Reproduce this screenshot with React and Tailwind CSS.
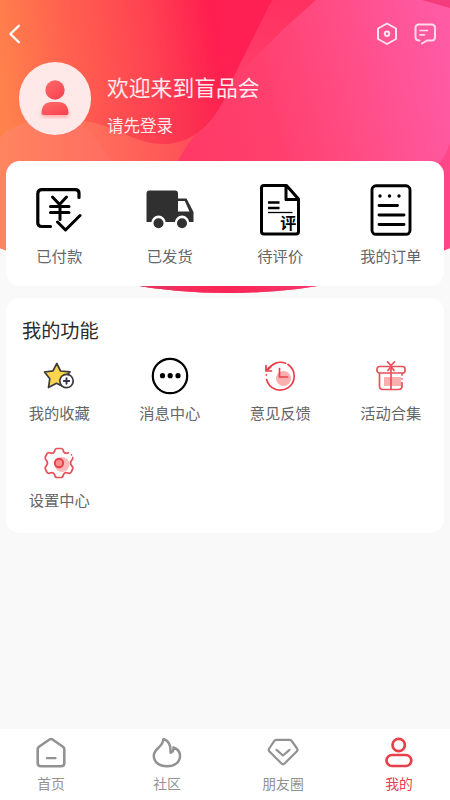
import { useState } from 'react';

const HeaderBackground = () => (
  <svg className="absolute left-0 top-0 w-full h-[294px]" viewBox="0 0 450 294" fill="none">
    <defs>
      <linearGradient id="base" gradientUnits="userSpaceOnUse" x1="190" y1="130" x2="450" y2="70">
        <stop offset="0" stopColor="#ff3a66" />
        <stop offset="0.3" stopColor="#ff406e" />
        <stop offset="0.7" stopColor="#ff508c" />
        <stop offset="1" stopColor="#ff5aa4" />
      </linearGradient>
      <linearGradient id="coral" gradientUnits="userSpaceOnUse" x1="0" y1="150" x2="215" y2="130">
        <stop offset="0" stopColor="#ff8a5c" />
        <stop offset="0.5" stopColor="#ff6a5a" />
        <stop offset="0.8" stopColor="#ff5658" />
        <stop offset="1" stopColor="#ff3f60" />
      </linearGradient>
      <linearGradient id="hill" gradientUnits="userSpaceOnUse" x1="0" y1="150" x2="112" y2="150">
        <stop offset="0" stopColor="#ff8560" />
        <stop offset="1" stopColor="#ff6c62" />
      </linearGradient>
      <linearGradient id="wave" gradientUnits="userSpaceOnUse" x1="0" y1="80" x2="235" y2="50">
        <stop offset="0" stopColor="#ff824c" />
        <stop offset="0.3" stopColor="#ff614f" />
        <stop offset="0.65" stopColor="#ff4252" />
        <stop offset="0.92" stopColor="#ff1e50" />
        <stop offset="1" stopColor="#ff2053" />
      </linearGradient>
      <linearGradient id="shade" gradientUnits="userSpaceOnUse" x1="130" y1="80" x2="165" y2="150">
        <stop offset="0" stopColor="#f0304f" stopOpacity="0" />
        <stop offset="1" stopColor="#f0304f" stopOpacity="0.3" />
      </linearGradient>
      <linearGradient id="beam" gradientUnits="userSpaceOnUse" x1="262" y1="0" x2="248" y2="80">
        <stop offset="0" stopColor="#ff3160" />
        <stop offset="1" stopColor="#ff3f69" />
      </linearGradient>
      <linearGradient id="bottom" gradientUnits="userSpaceOnUse" x1="130" y1="0" x2="330" y2="0">
        <stop offset="0" stopColor="#e8305f" />
        <stop offset="0.22" stopColor="#ea325f" />
        <stop offset="0.23" stopColor="#f42d5c" />
        <stop offset="0.5" stopColor="#fb2456" />
        <stop offset="1" stopColor="#f23c70" />
      </linearGradient>
      <clipPath id="arc">
        <path d="M0 0H450V248Q344 293 229 293Q114 293 0 248Z" />
      </clipPath>
    </defs>
    <g clipPath="url(#arc)">
      <rect width="450" height="294" fill="url(#base)" />
      <path d="M0 100H214Q206 120 196 134Q186 146 177 162V294H0Z" fill="url(#coral)" />
      <path d="M80 124Q98 138 112 162V294H0V137Q40 105 80 124Z" fill="url(#hill)" />
      <path d="M260 0H316Q270 40 234 80Z" fill="url(#beam)" />
      <path id="wave-shape" d="M0 0H272L233 78C222 112 200 144 163 144C135 144 112 124 84 121C50 115 18 120 0 137Z" fill="url(#wave)" />
      <path d="M233 78C222 112 200 144 163 144C135 144 112 124 84 121V50H233Z" fill="url(#shade)" />
      <path d="M422 0L450 8V0Z" fill="#f43b7c" />
      <path d="M450 143Q447 154 438 165V294H450Z" fill="#ff4688" />
      <rect x="120" y="280" width="220" height="14" fill="url(#bottom)" />
    </g>
  </svg>
);

const PaidIcon = () => (
  <svg width="46" height="44" viewBox="0 0 46 44" fill="none" stroke="#000" strokeWidth="3.2" strokeLinecap="round" strokeLinejoin="round">
    <path d="M14.500 38.500H6Q1.800 38.500 1.800 35V5.500Q1.800 1.700 6 1.700H39Q43 1.700 43 5V9.500" />
    <path d="M16.500 9L23.500 16.500L30.500 9M14.500 18.500H33M14.500 24.500H33M24 17V31.500" strokeWidth="3" />
    <path d="M21.500 34L29.500 42L44 27.500" strokeWidth="3" />
  </svg>
);

const TruckIcon = () => (
  <svg width="48" height="40" viewBox="0 0 48 40">
    <path d="M3.500 0.500H29Q32 0.500 32 3.500V8.500H40.500L47.500 22V32H0.500V3.500Q0.500 0.500 3.500 0.500ZM32 11V21.500H43.500L38.800 11Z" fill="#303030" fillRule="evenodd" />
    <circle cx="12.500" cy="32.800" r="7.200" fill="#fff" />
    <circle cx="36" cy="32.800" r="7.200" fill="#fff" />
    <circle cx="12.500" cy="33.200" r="5" fill="#303030" />
    <circle cx="36" cy="33.200" r="5" fill="#303030" />
  </svg>
);

const ReviewIcon = () => (
  <div className="relative w-10 h-[52px]">
    <svg width="40" height="52" viewBox="0 0 40 52" fill="none" stroke="#000" strokeWidth="3">
      <path d="M26.500 1.500H4Q1.500 1.500 1.500 4V47.500Q1.500 50 4 50H36Q38.500 50 38.500 47.500V15ZM26 1.500V15.500H38.500" strokeLinejoin="round" />
      <path d="M8 18.500H19.500M8 24H19.500" strokeWidth="2.700" />
      <path d="M8 28.500H32.500" strokeWidth="1.300" />
    </svg>
    <span className="absolute left-[20px] top-[30px] text-[16px] leading-[16px] font-bold text-black">评</span>
  </div>
);

const OrderIcon = () => (
  <svg width="42" height="52" viewBox="0 0 42 52" fill="none" stroke="#000" strokeWidth="2.900" strokeLinecap="round">
    <rect x="2" y="1.800" width="38" height="48.500" rx="4" strokeWidth="2.900" />
    <path d="M9 21.500H27.500M9 31H34M9 40.500H34" />
    <path d="M10 12H10.010M19.500 12H19.510M29 12H29.010" strokeWidth="3.400" />
  </svg>
);

const FavoriteIcon = () => (
  <svg width="32" height="28" viewBox="0 0 32 28" strokeLinejoin="round" strokeLinecap="round">
    <path d="M13.800 1.500L17.500 9L27 9.800L20.500 16.500L22 25.500L13.500 21.300L5.500 25.500L6.800 16.800L1.500 10L10 8.800Z" fill="#fcd54c" stroke="#3c3b40" strokeWidth="1.700" />
    <circle cx="23.500" cy="19" r="6.700" fill="#fff" stroke="#3c3b40" strokeWidth="1.700" />
    <path d="M23.500 16.300V21.700M20.800 19H26.200" stroke="#34334b" strokeWidth="1.900" />
  </svg>
);

const MessageCenterIcon = () => (
  <svg width="38" height="38" viewBox="0 0 38 38">
    <circle cx="19" cy="19" r="17.200" fill="none" stroke="#000" strokeWidth="2.200" />
    <circle cx="11.500" cy="18.700" r="2.600" />
    <circle cx="19.200" cy="18.700" r="2.600" />
    <circle cx="27" cy="18.700" r="2.600" />
  </svg>
);

const FeedbackIcon = () => (
  <svg width="32" height="32" viewBox="0 0 32 32" fill="none" stroke="#e8404a" strokeWidth="1.700" strokeLinecap="round" strokeLinejoin="round">
    <circle cx="19.500" cy="18.500" r="7.500" fill="#fbb0b0" stroke="none" />
    <path d="M4.300 9.500A14 14 0 0 1 21.500 3.200M24 4.500A14 14 0 1 1 2.600 19.500" />
    <path d="M2 5.500V11H7.500M2.500 10.500L5 7.500M2.300 14.800V15" />
    <path d="M15.500 8.500V17H23.500" />
  </svg>
);

const GiftIcon = () => (
  <svg width="32" height="32" viewBox="0 0 32 32" fill="none" stroke="#e8505a" strokeWidth="1.700" strokeLinecap="round" strokeLinejoin="round">
    <rect x="9" y="17" width="17" height="9" fill="#fbb0b0" stroke="none" />
    <rect x="2" y="6.500" width="28" height="6.500" rx="2.500" />
    <path d="M4.500 13.500V26Q4.500 29.500 8 29.500H23.500Q27 29.500 27 26V22.500M27 18.800V18.810M27 13.500V15" />
    <path d="M16 6V29M12.500 1.800L16 5.500L19.500 1.800M16 6.500L13 10.500M16 6.500L19 10.500" />
  </svg>
);

const SettingsIcon = () => (
  <svg width="32" height="32" viewBox="0 0 32 32" fill="none" stroke="#e4525a" strokeWidth="1.700" strokeLinecap="round" strokeLinejoin="round">
    <circle cx="19" cy="17.500" r="7.500" fill="#fcb9b9" stroke="none" />
    <path d="M25.500 5.700Q22 7.300 20.500 4.500Q20 1.500 18 1.500H14Q12 1.500 11.500 4.500Q10 7.500 6.500 5.800Q4.800 5.300 3.800 7L2.300 10Q1.700 12 3.500 13.500Q5.500 16 3.500 18.500Q1.700 20 2.300 22L3.800 25Q4.800 26.700 6.500 26.200Q10 24.500 11.500 27.500Q12 30.500 14 30.500H18Q20 30.500 20.500 27.500Q22 24.500 25.500 26.200Q27.200 26.700 28.200 25L29.700 22Q30.300 20 28.500 18.500Q26.500 16 28.500 13.500Q30.300 12 29.700 10.500M28.500 7.800V7.810" />
    <circle cx="16" cy="16" r="4.200" fill="#fb8f92" stroke="#ee3d47" strokeWidth="1.900" />
  </svg>
);

const HomeIcon = () => (
  <svg width="32" height="32" viewBox="0 0 32 32" fill="none" stroke="currentColor" strokeWidth="2.600" strokeLinecap="round" strokeLinejoin="round">
    <path d="M14.500 2.500Q16 1.500 17.500 2.500L28 9.700Q29.300 10.700 29.300 12.300V26Q29.300 29.300 26 29.300H6Q2.700 29.300 2.700 26V12.300Q2.700 10.700 4 9.700Z" />
    <path d="M12 21.200H20.500" strokeWidth="2.300" />
  </svg>
);

const FireIcon = () => (
  <svg width="32" height="32" viewBox="0 0 32 32" fill="none" stroke="currentColor" strokeWidth="2.500" strokeLinecap="round" strokeLinejoin="round">
    <path d="M12.500 2C17.500 3.500 20 8.500 19.500 15.800Q23 14.500 22.500 10.500C27 12 29 15.500 29 19C29 25 24 29.300 16 29.300C8 29.300 2.800 25 2.800 18.500C2.800 11.500 12 10.500 12.500 2Z" />
  </svg>
);

const CircleIcon = () => (
  <svg width="32" height="32" viewBox="0 0 32 32" fill="none" stroke="currentColor" strokeWidth="2.200" strokeLinecap="round" strokeLinejoin="round">
    <path d="M9.500 2.800H22.500Q23.700 2.800 24.500 3.700L30 11.500Q31 13.200 29.700 14.500L17.500 26.500Q16 28 14.500 26.500L2.500 14.500Q1.200 13.200 2.200 11.500L7.500 3.700Q8.300 2.800 9.500 2.800Z" />
    <path d="M9.500 12.800L16 18.500L22.500 12.800" />
  </svg>
);

const MineIcon = () => (
  <svg width="32" height="32" viewBox="0 0 32 32" fill="none" stroke="currentColor" strokeWidth="2.700">
    <circle cx="15.700" cy="8" r="6.200" />
    <rect x="3.500" y="18" width="24.800" height="11" rx="5.500" />
  </svg>
);

const orders = [
  { name: '已付款', icon: <PaidIcon /> },
  { name: '已发货', icon: <TruckIcon /> },
  { name: '待评价', icon: <ReviewIcon /> },
  { name: '我的订单', icon: <OrderIcon /> },
];

const features = [
  { name: '我的收藏', icon: <FavoriteIcon /> },
  { name: '消息中心', icon: <MessageCenterIcon /> },
  { name: '意见反馈', icon: <FeedbackIcon /> },
  { name: '活动合集', icon: <GiftIcon /> },
  { name: '设置中心', icon: <SettingsIcon /> },
];

const tabs = [
  { id: 'home', name: '首页', icon: <HomeIcon /> },
  { id: 'community', name: '社区', icon: <FireIcon /> },
  { id: 'friends', name: '朋友圈', icon: <CircleIcon /> },
  { id: 'mine', name: '我的', icon: <MineIcon /> },
];

function App() {
  const [activeTab, setActiveTab] = useState('mine');

  return (
    <div className="relative h-screen flex flex-col overflow-hidden bg-[#f9f9f9] font-['Noto_Sans_CJK_SC',sans-serif]">
      <HeaderBackground />

      <div className="relative flex-1">
        {/* Top bar */}
        <div className="flex h-[62px] items-center justify-between pl-2 pr-[13px] pt-[6px]">
          <svg width="14" height="20" viewBox="0 0 14 20" fill="none" stroke="#fff" strokeWidth="2.300" strokeLinecap="round" strokeLinejoin="round">
            <path d="M10.800 1.800L2.300 10L10.800 18.200" />
          </svg>
          <div className="flex gap-4">
            <svg width="22" height="24" viewBox="0 0 22 24" fill="none" stroke="#ffe3ee" strokeWidth="2" strokeLinejoin="round">
              <path d="M11 1.500L20 6.500V17L11 22L2 17V6.500Z" />
              <circle cx="11" cy="11.800" r="2.200" strokeWidth="2" />
            </svg>
            <svg width="23" height="24" viewBox="0 0 23 24" fill="none" stroke="#ffdcec" strokeWidth="2" strokeLinecap="round" strokeLinejoin="round">
              <path d="M5.500 18.500Q1.500 18.500 1.500 15V6Q1.500 2.500 5 2.500H17.500Q21 2.500 21 6V15Q21 18.500 17.500 18.500H13L8 21.500" />
              <path d="M6 8.500H13.500M6 12.800H10.500" strokeWidth="1.700" />
            </svg>
          </div>
        </div>

        {/* User */}
        <div className="flex pl-[19px] h-[99px]">
          <div className="w-[72px] h-[73px] rounded-full bg-[#ffe8e8] flex justify-center pt-[17px]">
            <svg width="34" height="40" viewBox="0 0 34 40">
              <defs>
                <linearGradient id="avatar" x1="0" y1="0" x2="0.7" y2="1">
                  <stop offset="0" stopColor="#ff6c68" />
                  <stop offset="1" stopColor="#f84553" />
                </linearGradient>
                <filter id="glow" x="-30%" y="-30%" width="160%" height="160%">
                  <feGaussianBlur stdDeviation="2" />
                </filter>
              </defs>
              <path d="M4 38Q4 25 17 25Q30 25 30 38Z" fill="#ffa0a0" filter="url(#glow)" />
              <circle cx="17" cy="11" r="9.700" fill="url(#avatar)" />
              <path d="M3.500 34Q4 23 14 23H20Q30 23 30.500 34Q30.500 36 28.500 36H5.500Q3.500 36 3.500 34Z" fill="url(#avatar)" />
            </svg>
          </div>
          <div className="ml-4 text-[#ffe9ed]">
            <div className="mt-[9px] text-[21.8px] leading-8">欢迎来到盲品会</div>
            <div className="mt-[10px] text-[16.5px] leading-6">请先登录</div>
          </div>
        </div>

        {/* Orders */}
        <div className="mx-[6px] h-[125px] rounded-[14px] bg-white">
          <div className="-mx-0.5 grid grid-cols-4 pt-5">
            {orders.map((item) => (
              <button key={item.name} className="flex flex-col items-center h-[86px]">
                <div className="h-[57px] flex items-center">{item.icon}</div>
                <div className="mt-[5px] text-[15.3px] leading-6 text-[#666]">{item.name}</div>
              </button>
            ))}
          </div>
        </div>

        {/* Features */}
        <div className="mx-[6px] mt-3 h-[235px] rounded-[14px] bg-white">
          <h2 className="pl-4 pt-4 text-[19.2px] leading-8 text-[#2c2c2c]">我的功能</h2>
          <div className="-mx-0.5 grid grid-cols-4 auto-rows-[87px] pt-[11px]">
            {features.map((item) => (
              <button key={item.name} className="flex flex-col items-center">
                <div className="h-[38px] flex items-center">{item.icon}</div>
                <div className="mt-[5px] text-[15.3px] leading-6 text-[#666]">{item.name}</div>
              </button>
            ))}
          </div>
        </div>
      </div>

      {/* Tab bar */}
      <div className="relative h-[71px] bg-white flex justify-between pl-[22px] pr-[22px]">
        {tabs.map((tab) => (
          <button
            key={tab.id}
            onClick={() => setActiveTab(tab.id)}
            className={`w-[58px] flex flex-col items-center pt-2 ${activeTab === tab.id ? 'text-[#e8404a]' : 'text-[#929292]'}`}
          >
            {tab.icon}
            <span className="mt-1 text-[13.8px] leading-5">{tab.name}</span>
          </button>
        ))}
      </div>
    </div>
  );
}

export default App;
